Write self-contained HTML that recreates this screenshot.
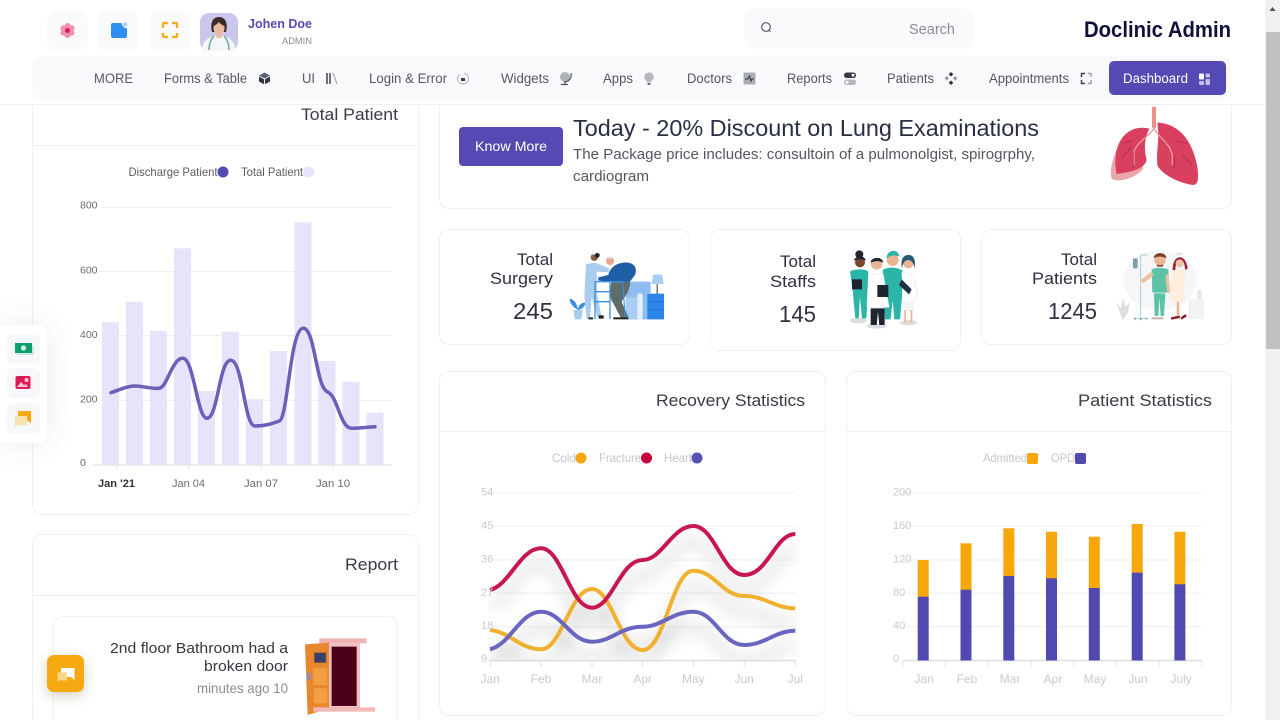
<!DOCTYPE html>
<html lang="en"><head><meta charset="utf-8"><title>Doclinic Admin</title>
<style>
html,body{margin:0;padding:0;width:1280px;height:720px;overflow:hidden;background:#fff;font-family:"Liberation Sans",sans-serif}
#w{position:absolute;left:0;top:0;width:1280px;height:720px;overflow:hidden;background:#fff}
.a{position:absolute;box-sizing:border-box}
.card{background:#fff;border:1px solid #f0f1f4;border-radius:10px}
.open{border-bottom:none;border-radius:10px 10px 0 0}
.ib{background:#fafafd;border-radius:10px}
svg{position:absolute;left:0;top:0;display:block}
text{font-family:"Liberation Sans",sans-serif}
.nav text,text.nav{font-size:13.5px;fill:#565662}
.h{font-size:17px;fill:#3a3b46}
.st{font-size:17px;fill:#2f3141}
.num{font-size:23px;fill:#2f3141}
.ax{font-size:10.5px;fill:#6c6c72}
.axl{font-size:11px;fill:#c9c9d0}
.xl{font-size:12px;fill:#c9c9d0}
.lg{font-size:12px;fill:#c6c6cc}
</style></head><body>
<div id="w">
<!-- cards -->
<div class="a card" style="left:32px;top:60px;width:387px;height:455px"></div>
<div class="a" style="left:33px;top:145px;width:385px;height:1px;background:#f0f1f4"></div>
<div class="a card open" style="left:32px;top:534px;width:387px;height:186px"></div>
<div class="a" style="left:33px;top:595px;width:385px;height:1px;background:#f0f1f4"></div>
<div class="a card open" style="left:53px;top:616px;width:345px;height:104px"></div>
<div class="a card" style="left:439px;top:60px;width:793px;height:149px"></div>
<div class="a card" style="left:439px;top:229px;width:251px;height:116px"></div>
<div class="a card" style="left:710px;top:229px;width:251px;height:122px"></div>
<div class="a card" style="left:981px;top:229px;width:251px;height:116px"></div>
<div class="a card" style="left:439px;top:371px;width:387px;height:345px"></div>
<div class="a" style="left:440px;top:431px;width:385px;height:1px;background:#f0f1f4"></div>
<div class="a card" style="left:846px;top:371px;width:386px;height:345px"></div>
<div class="a" style="left:847px;top:431px;width:384px;height:1px;background:#f0f1f4"></div>
<!-- header -->
<div class="a" style="left:0;top:0;width:1265px;height:105px;background:#fff;border-bottom:1px solid #eef0f3"></div>
<div class="a ib" style="left:47px;top:11px;width:41px;height:40px"></div>
<div class="a ib" style="left:98px;top:11px;width:41px;height:40px"></div>
<div class="a ib" style="left:149px;top:11px;width:41px;height:40px"></div>
<div class="a ib" style="left:744px;top:8px;width:230px;height:41px"></div>
<div class="a" style="left:32px;top:56px;width:1199px;height:44px;background:#fafafd;border-radius:8px"></div>
<div class="a" style="left:1109px;top:61px;width:117px;height:34px;background:#5549b3;border-radius:5px"></div>
<div class="a" style="left:459px;top:127px;width:104px;height:39px;background:#5549b3;border-radius:4px"></div>
<!-- scrollbar -->
<div class="a" style="left:1265px;top:0;width:15px;height:720px;background:#f1f1f1"></div>
<div class="a" style="left:1266px;top:32px;width:14px;height:317px;background:#c1c1c1"></div>
<!-- float panel -->
<div class="a" style="left:0;top:325px;width:47px;height:118px;background:#fff;border-radius:0 8px 8px 0;box-shadow:0 0 30px rgba(60,60,90,.1)"></div>
<div class="a" style="left:7px;top:334px;width:33px;height:30px;background:#f7f8fb;border-radius:6px"></div>
<div class="a" style="left:7px;top:368px;width:33px;height:30px;background:#f7f8fb;border-radius:6px"></div>
<div class="a" style="left:7px;top:403px;width:33px;height:31px;background:#f7f8fb;border-radius:6px"></div>

<svg width="1280" height="720" viewBox="0 0 1280 720" xmlns="http://www.w3.org/2000/svg">
<defs>
<filter id="b" x="-20%" y="-40%" width="140%" height="180%"><feGaussianBlur stdDeviation="8"/></filter>
<clipPath id="cp"><rect x="488" y="490" width="312" height="172"/></clipPath>
</defs>
<!-- scrollbar arrow -->
<path d="M1272.5 7l-3 4h6z" fill="#505050"/>
<!-- top icons -->
<g transform="translate(67.500,30.500)" fill="#f48fb0"><circle cx="0" cy="-4.500" r="3"/><circle cx="4" cy="-2.300" r="3"/><circle cx="4" cy="2.300" r="3"/><circle cx="0" cy="4.500" r="3"/><circle cx="-4" cy="2.300" r="3"/><circle cx="-4" cy="-2.300" r="3"/><circle r="2.500" fill="#d81b60"/></g>
<path d="M113 23h8.500a6 6 0 0 0 5.500 5.500V36a2 2 0 0 1-2 2H113a2 2 0 0 1-2-2V25a2 2 0 0 1 2-2z" fill="#2e8ff0"/><circle cx="125" cy="24.500" r="2.200" fill="#a9d2f7"/>
<path d="M163 28v-4a1 1 0 0 1 1-1h4M172 23h4a1 1 0 0 1 1 1v4M177 33v3a1 1 0 0 1-1 1h-4M168 37h-4a1 1 0 0 1-1-1v-3" fill="none" stroke="#f2b01e" stroke-width="2.400"/>
<!-- avatar -->
<rect x="200" y="13" width="38" height="38" rx="9" fill="#cbc7ec"/>
<path d="M202 51c0-10 6-13 12-15h10c6 2 11 5 11 15z" fill="#f4f6f8"/>
<path d="M209 50c0-4 1-10 5-14M229 50c0-4-1-10-5-14" stroke="#6fa8a0" stroke-width="1.500" fill="none"/>
<path d="M212 32c-2-8 0-15 7-15s9 7 7 15z" fill="#3a2a2a"/><ellipse cx="219" cy="28" rx="5.500" ry="7" fill="#eab99e"/><rect x="216.500" y="33" width="5" height="5" fill="#eab99e"/><path d="M213.500 26c0-6 3-7 5.500-7s5.500 1 5.500 7c-3-1-5-3-6-4-1 2-3 3-5 4z" fill="#3a2a2a"/>
<text x="248" y="28" font-size="13" font-weight="bold" fill="#5549b3" textLength="64" lengthAdjust="spacingAndGlyphs">Johen Doe</text>
<text x="282" y="44" font-size="9.500" fill="#8b8b93" textLength="30" lengthAdjust="spacingAndGlyphs">ADMIN</text>
<circle cx="766" cy="27" r="4.300" fill="none" stroke="#55565f" stroke-width="1.200"/><path d="M769 30.500l1.500 1.500" stroke="#55565f"/>
<text x="909" y="34" font-size="15" fill="#8a8b94" textLength="46" lengthAdjust="spacingAndGlyphs">Search</text>
<text x="1084" y="37" font-size="22" font-weight="bold" fill="#11103c" textLength="147" lengthAdjust="spacingAndGlyphs">Doclinic Admin</text>
<!-- nav -->
<g class="nav">
<text x="94" y="83" textLength="39" lengthAdjust="spacingAndGlyphs">MORE</text>
<text x="164" y="83" textLength="83" lengthAdjust="spacingAndGlyphs">Forms &amp; Table</text>
<text x="302" y="83" textLength="13" lengthAdjust="spacingAndGlyphs">UI</text>
<text x="369" y="83" textLength="78" lengthAdjust="spacingAndGlyphs">Login &amp; Error</text>
<text x="501" y="83" textLength="48" lengthAdjust="spacingAndGlyphs">Widgets</text>
<text x="603" y="83" textLength="30" lengthAdjust="spacingAndGlyphs">Apps</text>
<text x="687" y="83" textLength="45" lengthAdjust="spacingAndGlyphs">Doctors</text>
<text x="787" y="83" textLength="45" lengthAdjust="spacingAndGlyphs">Reports</text>
<text x="887" y="83" textLength="47" lengthAdjust="spacingAndGlyphs">Patients</text>
<text x="989" y="83" textLength="80" lengthAdjust="spacingAndGlyphs">Appointments</text>
</g>
<text x="1123" y="83" font-size="13.500" fill="#fff" textLength="65" lengthAdjust="spacingAndGlyphs">Dashboard</text>
<!-- nav icons -->
<path d="M264.500 72.500l5.500 3-5.500 3-5.500-3z" fill="#59616e"/><path d="M259 76.500l5 2.700v5l-5-2.700zM270 76.500l-5 2.700v5l5-2.700z" fill="#2e3642"/>
<path d="M327 73v11M330 73v11" stroke="#4a4f5a" stroke-width="1.600"/><path d="M333 73l4 11" stroke="#a8abb3" stroke-width="1.200"/>
<circle cx="463" cy="78.500" r="5.500" fill="none" stroke="#c0c3c9" stroke-width="1.400" stroke-dasharray="22 5"/><rect x="461" y="78" width="4" height="3" fill="#3a404c"/>
<circle cx="565" cy="77" r="5" fill="#adb1b8"/><path d="M571 73c1 5-2 9-7 9M565 82v2M561 84.500h7" stroke="#50565f" fill="none" stroke-width="1.200"/>
<path d="M649 72.500a4.500 4.500 0 0 1 3 8l-1.500 2h-3l-1.500-2a4.500 4.500 0 0 1 3-8z" fill="#b5b8be"/><rect x="647.500" y="83" width="3" height="2" fill="#6e727a"/>
<rect x="743.500" y="72.500" width="12" height="12" rx="1" fill="#a9adb5"/><path d="M745 79h3l1.500-3 1.500 5 1-2h2" stroke="#2e3642" fill="none"/>
<rect x="844" y="72.500" width="12" height="5.500" rx="2.700" fill="#343a46"/><rect x="844" y="79.500" width="12" height="5.500" rx="2.700" fill="#b5b8be"/><circle cx="853" cy="75.200" r="1.500" fill="#fff"/><circle cx="847" cy="82.200" r="1.500" fill="#fff"/>
<path d="M951 72l2.300 2.300-2.300 2.300-2.300-2.300zM951 80.500l2.300 2.300-2.300 2.300-2.300-2.300z" fill="#2e3642"/><path d="M946.800 76l2.300 2.300-2.300 2.300-2.300-2.300zM955.200 76l2.300 2.300-2.300 2.300-2.300-2.300z" fill="#9a9ea6"/>
<path d="M1081.500 77v-3.500h3.500M1081.500 80v3.500h3.500" stroke="#3a404c" fill="none" stroke-width="1.500"/><path d="M1087.500 73.500h3.500v3.500M1087.500 83.500h3.500v-3.500" stroke="#a0a4ac" fill="none" stroke-width="1.500"/>
<rect x="1199" y="73.500" width="5" height="6" rx="1" fill="#fff"/><rect x="1205.500" y="73.500" width="4.500" height="4" rx="1" fill="#c4bfe8"/><rect x="1199" y="81" width="5" height="4" rx="1" fill="#c4bfe8"/><rect x="1205.500" y="79" width="4.500" height="6" rx="1" fill="#c4bfe8"/>
<!-- headings -->
<text class="h" x="301" y="120" textLength="97" lengthAdjust="spacingAndGlyphs">Total Patient</text>
<text class="h" x="345" y="570" textLength="53" lengthAdjust="spacingAndGlyphs">Report</text>
<text class="h" x="656" y="406" textLength="149" lengthAdjust="spacingAndGlyphs">Recovery Statistics</text>
<text class="h" x="1078" y="406" textLength="134" lengthAdjust="spacingAndGlyphs">Patient Statistics</text>
<!-- banner -->
<text x="475" y="151" font-size="14" fill="#fff" textLength="72" lengthAdjust="spacingAndGlyphs">Know More</text>
<text x="573" y="136" font-size="23" fill="#2a2e45" textLength="466" lengthAdjust="spacingAndGlyphs">Today - 20% Discount on Lung Examinations</text>
<text x="573" y="159" font-size="15" fill="#55565f" textLength="462" lengthAdjust="spacingAndGlyphs">The Package price includes: consultoin of a pulmonolgist, spirogrphy,</text>
<text x="573" y="181" font-size="15" fill="#55565f" textLength="76" lengthAdjust="spacingAndGlyphs">cardiogram</text>
<!-- lungs -->
<g transform="translate(1080,100) scale(.3333)">
<path d="M130 110C105 150 85 210 95 235c15 15 75 0 95-30z" fill="#eba6ae"/>
<path d="M208 86C170 76 130 92 113 140c-10 30-8 60-3 82 30-4 84-12 90-42-8-30-8-62 8-94z" fill="#d9405f"/>
<path d="M232 68c48 2 98 32 118 122 8 40 5 65-10 65-40-5-95-30-108-60-4-45 8-75 0-127z" fill="#d9405f"/>
<rect x="216" y="20" width="12" height="65" rx="5" fill="#ee8f8a"/>
<path d="M222 85c-15 25-50 40-60 70v40M222 85c15 30 45 40 55 80v30" stroke="#ef9a95" stroke-width="4" fill="none"/>
<path d="M130 130l30-8M125 175l30-35M160 160l-1 45M285 165l-3 40M290 122l30 8M305 160l30 35" stroke="#a32645" stroke-width="2" fill="none"/>
</g>
<!-- stats text -->
<text class="st" x="517" y="265" textLength="36" lengthAdjust="spacingAndGlyphs">Total</text>
<text class="st" x="490" y="284" textLength="63" lengthAdjust="spacingAndGlyphs">Surgery</text>
<text class="num" x="513" y="319" textLength="40" lengthAdjust="spacingAndGlyphs">245</text>
<text class="st" x="780" y="267" textLength="36" lengthAdjust="spacingAndGlyphs">Total</text>
<text class="st" x="770" y="287" textLength="46" lengthAdjust="spacingAndGlyphs">Staffs</text>
<text class="num" x="779" y="322" textLength="37" lengthAdjust="spacingAndGlyphs">145</text>
<text class="st" x="1061" y="265" textLength="36" lengthAdjust="spacingAndGlyphs">Total</text>
<text class="st" x="1032" y="284" textLength="65" lengthAdjust="spacingAndGlyphs">Patients</text>
<text class="num" x="1048" y="319" textLength="49" lengthAdjust="spacingAndGlyphs">1245</text>
<!-- illustration 1 -->
<g transform="translate(560,240) scale(.3333)">
<path d="M197 125h75v35h40v78H197z" fill="#8fbdf0"/>
<rect x="197" y="172" width="40" height="66" fill="#a9cdf3"/><rect x="232" y="160" width="16" height="78" rx="6" fill="#e4effa"/>
<rect x="262" y="162" width="50" height="76" fill="#2f86ea"/><path d="M262 185h50M262 210h50" stroke="#1f6cc4" stroke-width="2"/>
<rect x="290" y="130" width="3" height="32" fill="#333"/><path d="M279 104h27l5 28h-36z" fill="#a8cdf2"/>
<path d="M40 210h28l-4 28H44z" fill="#a8cdf2"/><path d="M54 210c-2-15-8-30-25-34 0 15 10 25 25 34zM54 210c0-10 6-22 22-22-2 14-10 20-22 22z" fill="#3d8fe0"/>
<path d="M78 72l27-4 43 17-2 12-36-2 2 70 13 67h-13l-17-62-5 65H80l-7-65z" fill="#a9cdee"/>
<circle cx="103" cy="52" r="11" fill="#8a5a44"/><path d="M93 44h20l-3-7H95z" fill="#e8f1fa"/><circle cx="112" cy="46" r="7" fill="#222"/>
<path d="M85 232h14v6H85zM116 226h15v10h-15z" fill="#222"/>
<path d="M155 125h55c2 25-15 45-25 60l20 47h-23l-22-42c-15-20-10-45-5-65z" fill="#5f6c6c"/>
<path d="M145 105c5-25 30-40 60-37 20 4 27 17 20 37l-15 20h-60l-35-3v-10z" fill="#1f5fa8"/>
<circle cx="150" cy="63" r="12" fill="#e9a48c"/><path d="M140 55c5-7 15-8 20-2-5 3-15 5-20 2z" fill="#ddd"/>
<path d="M105 125h85M105 125v112M150 125v112M105 155h45M105 185h45" stroke="#3d8fe0" stroke-width="4" fill="none"/>
<path d="M188 125l8 112" stroke="#3d8fe0" stroke-width="3"/>
<rect x="160" y="232" width="45" height="6" fill="#222"/>
</g>
<!-- illustration 2 -->
<g transform="translate(840,240) scale(.3333)">
<ellipse cx="55" cy="242" rx="26" ry="8" fill="#ddd"/><ellipse cx="110" cy="258" rx="30" ry="8" fill="#ddd"/><ellipse cx="205" cy="248" rx="25" ry="8" fill="#ddd"/>
<circle cx="58" cy="43" r="12" fill="#22252e"/><circle cx="60" cy="67" r="15" fill="#7a4630"/><path d="M42 62c2-15 30-20 36 0-10-5-25-6-36 0z" fill="#22252e"/>
<path d="M30 95c10-8 45-10 55 0v60l-6 80H66l-6-65-4 65H46l-8-85z" fill="#2bb5a8"/><rect x="36" y="118" width="30" height="30" fill="#1e2530"/>
<path d="M128 90c17-10 42-10 60 2l-2 78-6 68h-17l-5-58-6 58h-17l-3-68z" fill="#2bb5a8"/>
<circle cx="158" cy="60" r="18" fill="#e9b494"/><path d="M140 55c0-28 36-30 38-5-12-6-26-6-38 5z" fill="#2bb5a8"/>
<path d="M85 102h45l18 100H80z" fill="#fff" stroke="#cdd5da"/><path d="M92 205h42v50H118l-4-40-4 40H92z" fill="#1e2530"/>
<circle cx="110" cy="72" r="17" fill="#e9b494"/><path d="M92 68c0-18 36-20 38 0-12-6-24-6-38 0z" fill="#1e2530"/>
<rect x="112" y="135" width="33" height="36" fill="#1e2530"/>
<path d="M185 95l35 10 12 55-8 25h-35z" fill="#fff" stroke="#cdd5da"/><rect x="190" y="185" width="30" height="28" fill="#f2f4f6"/><rect x="193" y="210" width="5" height="38" fill="#e9b494"/><rect x="212" y="210" width="5" height="38" fill="#e9b494"/>
<circle cx="205" cy="70" r="15" fill="#e9b494"/><path d="M186 85c-5-30 5-40 20-40s22 15 18 40c-3-15-8-25-20-25-10 0-15 10-18 25z" fill="#245a73"/>
<path d="M185 118l30 30-8 15-30-28z" fill="#1e2f45"/>
</g>
<!-- illustration 3 -->
<g transform="translate(1110,240) scale(.3333)">
<ellipse cx="150" cy="120" rx="110" ry="90" fill="#f6f6f8"/>
<path d="M92 45h20M92 45v190M75 235h35" stroke="#a4cfd4" stroke-width="3" fill="none"/><rect x="69" y="55" width="14" height="30" rx="3" fill="#7a9fb2"/>
<path d="M38 240l-20-55 15 20 6-30 8 25 14-15-8 35z" fill="#dedfe2"/>
<rect x="238" y="180" width="42" height="55" fill="#f2f3f5" stroke="#dcdde0"/><rect x="262" y="150" width="12" height="28" fill="#e4e5e8"/>
<path d="M125 88c12-6 35-6 50 0l4 70h-52z" fill="#5cc3a8"/><path d="M132 160h34l-4 68h-10l-4-55-3 55h-11z" fill="#5cc3a8"/>
<path d="M90 122l35-28 5 12-30 24zM175 100l6 55-9 3-6-50z" fill="#edc09f"/>
<circle cx="150" cy="60" r="17" fill="#edb594"/><path d="M131 55c0-20 38-22 38 0-8-5-28-8-38 0z" fill="#7a3f20"/><path d="M140 72c5 5 15 5 20 0l-2 8h-16z" fill="#7a3f20"/>
<path d="M188 90c10-6 30-6 40 10l-5 45 2 40h-42c-8-30 0-65 5-95z" fill="#fdeee0"/><rect x="200" y="185" width="8" height="40" fill="#edb594"/>
<path d="M188 90c0-50 40-50 45-5l-8 5c0-20-6-30-14-30-10 0-15 15-15 30z" fill="#9a2232"/><circle cx="209" cy="70" r="12" fill="#edc5a8"/><path d="M198 44h22l-3-6h-16z" fill="#f2d6d6"/>
<path d="M183 232l25-6 3 8-28 5zM212 232l15-10 3 8-16 9z" fill="#8a2030"/>
<path d="M125 232h35v6h-35z" fill="#b9b3a8"/><circle cx="75" cy="236" r="3" fill="#7a9fb2"/><circle cx="92" cy="238" r="3" fill="#7a9fb2"/><circle cx="110" cy="236" r="3" fill="#7a9fb2"/>
</g>
<!-- left chart -->
<text x="128.500" y="176" font-size="12" fill="#5c5c64" textLength="89" lengthAdjust="spacingAndGlyphs">Discharge Patient</text><circle cx="223" cy="172" r="5.500" fill="#5549b3"/>
<text x="241" y="176" font-size="12" fill="#5c5c64" textLength="62" lengthAdjust="spacingAndGlyphs">Total Patient</text><circle cx="308.500" cy="172" r="5.500" fill="#e7e3fb"/>
<g stroke="#efeff3" stroke-width="1"><path d="M100 207.500h292M100 271.500h292M100 335.500h292M100 400.500h292"/></g>
<g fill="#e7e3fb">
<rect x="102" y="322.300" width="17" height="142.700"/><rect x="126" y="301.700" width="17" height="163.300"/><rect x="150" y="331" width="17" height="134"/><rect x="174" y="248.300" width="17" height="216.700"/><rect x="198" y="391" width="17" height="74"/><rect x="222" y="331.700" width="17" height="133.300"/><rect x="246" y="399.300" width="17" height="65.700"/><rect x="270" y="351" width="17" height="114"/><rect x="294.500" y="222.300" width="17" height="242.700"/><rect x="318.500" y="361" width="17" height="104"/><rect x="342.500" y="381.700" width="17" height="83.300"/><rect x="366.500" y="412.700" width="17" height="52.300"/>
</g>
<path d="M93 465h299" stroke="#e6e6ea" stroke-width="1.500"/>
<path d="M116.700 465v5M188.500 465v5M261 465v5M333 465v5" stroke="#e6e6ea"/>
<path d="M111 392.700C119 390 127 386 135 386C143 386 151 389 159 388.300C167 388 172 358.300 182.700 358.300C194 358.300 197 418.300 207 418.300C218 418.300 219 360.300 230.700 360.300C243 360.300 244 426 255 426C265 426 271 424 279.300 421C288 418 290 328.300 303.300 328.300C315 328.300 316 387 327.300 391.700C338 396 340 428.300 351.700 428.300C360 428.300 367 427 375 426.700" fill="none" stroke="#6a60ba" stroke-width="3.500" stroke-linecap="round"/>
<g class="ax"><text x="80" y="208.500">800</text><text x="80" y="273.500">600</text><text x="80" y="338">400</text><text x="80" y="402.500">200</text><text x="80" y="466">0</text></g>
<text x="98" y="487" font-size="11" font-weight="bold" fill="#333" textLength="37" lengthAdjust="spacingAndGlyphs">Jan '21</text>
<g class="ax" style="font-size:11px"><text x="172" y="487" textLength="33" lengthAdjust="spacingAndGlyphs">Jan 04</text><text x="244" y="487" textLength="34" lengthAdjust="spacingAndGlyphs">Jan 07</text><text x="316" y="487" textLength="34" lengthAdjust="spacingAndGlyphs">Jan 10</text></g>
<!-- float icons -->
<path d="M15 343h17v10H15z" fill="#0f9d6e"/><circle cx="23.500" cy="348" r="2.600" fill="#d7f0e6"/><path d="M17 354h16v-8" stroke="#a5d8c4" fill="none"/>
<rect x="15.500" y="376" width="15" height="13" rx="2" fill="#dc1e55"/><path d="M17 387l4-5 3 3 2-1 2 3z" fill="#f9c6d6"/><circle cx="26.500" cy="380" r="2" fill="#f9c6d6"/>
<path d="M18 411h13v12l-3-2h-10z" fill="#f7a912"/><path d="M15 416h12v9H18l-3 2z" fill="#f8e3b0"/>
<!-- recovery chart -->
<text class="lg" x="552" y="462" textLength="24" lengthAdjust="spacingAndGlyphs">Cold</text><circle cx="581" cy="458" r="5.500" fill="#f7a70a"/>
<text class="lg" x="599" y="462" textLength="42" lengthAdjust="spacingAndGlyphs">Fracture</text><circle cx="646.500" cy="458" r="5.500" fill="#c8003c"/>
<text class="lg" x="664" y="462" textLength="28" lengthAdjust="spacingAndGlyphs">Heart</text><circle cx="697" cy="458" r="5.500" fill="#5552b8"/>
<g stroke="#f0f0f3"><path d="M491 492.700h305M491 526.300h305M491 560h305M491 593.300h305M491 626.700h305"/></g>
<g clip-path="url(#cp)"><g filter="url(#b)" fill="none" stroke="#000" stroke-opacity=".17" stroke-width="6" transform="translate(0,16)">
<path d="M490 590C510 585 520 548.300 541 548.300C562 548.300 570 607.700 592 607.700C612 607.700 620 560 642.700 560C662 560 672 526 693.300 526C715 526 722 575 744.300 575C768 575 775 534 795.300 534"/>
<path d="M490 630C510 632 520 649.300 541 649.300C562 649.300 570 589 592 589C612 589 620 650 642.700 650C665 650 672 570.700 693.300 570.700C715 570.700 722 596 744.300 596C765 596 775 608.300 795.300 608.300"/>
<path d="M490 649.300C510 645 520 611.700 541 611.700C562 611.700 570 641.700 592 641.700C612 641.700 620 626.700 642.700 626.700C662 626.700 672 611.700 693.300 611.700C715 611.700 722 645 744.300 645C765 645 775 630.700 795.300 630.700"/>
</g></g>
<path d="M490 660.500h306" stroke="#dedee3" stroke-width="1.500"/>
<path d="M490.300 661v6M541 661v6M592 661v6M642.700 661v6M693.300 661v6M744.300 661v6M795.300 661v6" stroke="#e2e2e7"/>
<path d="M490 630C510 632 520 649.300 541 649.300C562 649.300 570 589 592 589C612 589 620 650 642.700 650C665 650 672 570.700 693.300 570.700C715 570.700 722 596 744.300 596C765 596 775 608.300 795.300 608.300" fill="none" stroke="#f0b030" stroke-width="4"/>
<path d="M490 590C510 585 520 548.300 541 548.300C562 548.300 570 607.700 592 607.700C612 607.700 620 560 642.700 560C662 560 672 526 693.300 526C715 526 722 575 744.300 575C768 575 775 534 795.300 534" fill="none" stroke="#c8174f" stroke-width="4"/>
<path d="M490 649.300C510 645 520 611.700 541 611.700C562 611.700 570 641.700 592 641.700C612 641.700 620 626.700 642.700 626.700C662 626.700 672 611.700 693.300 611.700C715 611.700 722 645 744.300 645C765 645 775 630.700 795.300 630.700" fill="none" stroke="#6a66c0" stroke-width="4"/>
<g class="axl"><text x="481" y="495.500">54</text><text x="481" y="529">45</text><text x="481" y="562.500">36</text><text x="481" y="596">27</text><text x="481" y="629">18</text><text x="481" y="662">9</text></g>
<g class="xl" text-anchor="middle"><text x="490.300" y="683">Jan</text><text x="541" y="683">Feb</text><text x="592" y="683">Mar</text><text x="642.700" y="683">Apr</text><text x="693.300" y="683">May</text><text x="744.300" y="683">Jun</text><text x="795.300" y="683">Jul</text></g>
<!-- patient chart -->
<text class="lg" x="983" y="462" textLength="44" lengthAdjust="spacingAndGlyphs">Admitted</text><rect x="1027" y="453" width="11" height="11" rx="2" fill="#f7a70a"/>
<text class="lg" x="1051" y="462" textLength="24" lengthAdjust="spacingAndGlyphs">OPD</text><rect x="1075" y="453" width="11" height="11" rx="2" fill="#4f49b0"/>
<g stroke="#f0f0f3"><path d="M903 492.700h299M903 526.300h299M903 560h299M903 593.300h299M903 626.700h299"/></g>
<path d="M903 660.500h299" stroke="#dedee3" stroke-width="1.500"/>
<path d="M902.700 661v6M945.300 661v6M988.300 661v6M1031.300 661v6M1074 661v6M1116.700 661v6M1159.300 661v6M1202 661v6" stroke="#e2e2e7"/>
<g fill="#f7a70a"><rect x="917.700" y="560" width="11" height="37"/><rect x="960.500" y="543.300" width="11" height="47"/><rect x="1003.300" y="528.300" width="11" height="48"/><rect x="1046" y="531.700" width="11" height="47"/><rect x="1088.800" y="536.700" width="11" height="52"/><rect x="1131.700" y="524" width="11" height="49"/><rect x="1174.400" y="531.700" width="11" height="53"/></g>
<g fill="#4f49b0"><rect x="917.700" y="596.700" width="11" height="63.800"/><rect x="960.500" y="589.700" width="11" height="70.800"/><rect x="1003.300" y="576" width="11" height="84.500"/><rect x="1046" y="578.300" width="11" height="82.200"/><rect x="1088.800" y="588" width="11" height="72.500"/><rect x="1131.700" y="572.700" width="11" height="87.800"/><rect x="1174.400" y="584.300" width="11" height="76.200"/></g>
<g class="axl"><text x="893" y="495.500">200</text><text x="893" y="529">160</text><text x="893" y="562.500">120</text><text x="893" y="596">80</text><text x="893" y="629">40</text><text x="893" y="662">0</text></g>
<g class="xl" text-anchor="middle"><text x="924" y="683">Jan</text><text x="967" y="683">Feb</text><text x="1010" y="683">Mar</text><text x="1053" y="683">Apr</text><text x="1095" y="683">May</text><text x="1138" y="683">Jun</text><text x="1181" y="683">July</text></g>
<!-- report -->
<text x="110" y="653" font-size="15" fill="#35363f" textLength="178" lengthAdjust="spacingAndGlyphs">2nd floor Bathroom had a</text>
<text x="204" y="671" font-size="15" fill="#35363f" textLength="84" lengthAdjust="spacingAndGlyphs">broken door</text>
<text x="197" y="693" font-size="13.500" fill="#8b8c94" textLength="91" lengthAdjust="spacingAndGlyphs">minutes ago 10</text>
<g transform="translate(30,600) scale(.3333)">
<rect x="868" y="115" width="142" height="15" fill="#eeb4b4"/><rect x="895" y="130" width="95" height="195" fill="#f2c0c0"/><rect x="905" y="140" width="75" height="178" fill="#4b0018"/>
<path d="M825 133l72-5v197l-64 20z" fill="#e8872e"/><rect x="853" y="158" width="35" height="30" fill="#35416b" stroke="#a85c1c" stroke-width="2"/>
<rect x="850" y="205" width="42" height="50" fill="#f0a040"/><rect x="852" y="265" width="40" height="45" fill="#f0a040"/>
<rect x="830" y="218" width="12" height="22" fill="#9a8ab0"/><rect x="850" y="322" width="185" height="13" fill="#f0b8b8"/>
</g>
</svg>
<div class="a" style="left:47px;top:655px;width:37px;height:37px;background:#f7a912;border-radius:7px;box-shadow:0 4px 12px rgba(90,70,20,.25)"></div>
<svg width="1280" height="720" viewBox="0 0 1280 720" style="pointer-events:none">
<path d="M61 668h13.500v12l-3.500-3h-10z" fill="#fff"/><path d="M57.500 672.500h9.500v8h-7.500l-2 2z" fill="#fbd58a"/>
</svg>
</div>
</body></html>
